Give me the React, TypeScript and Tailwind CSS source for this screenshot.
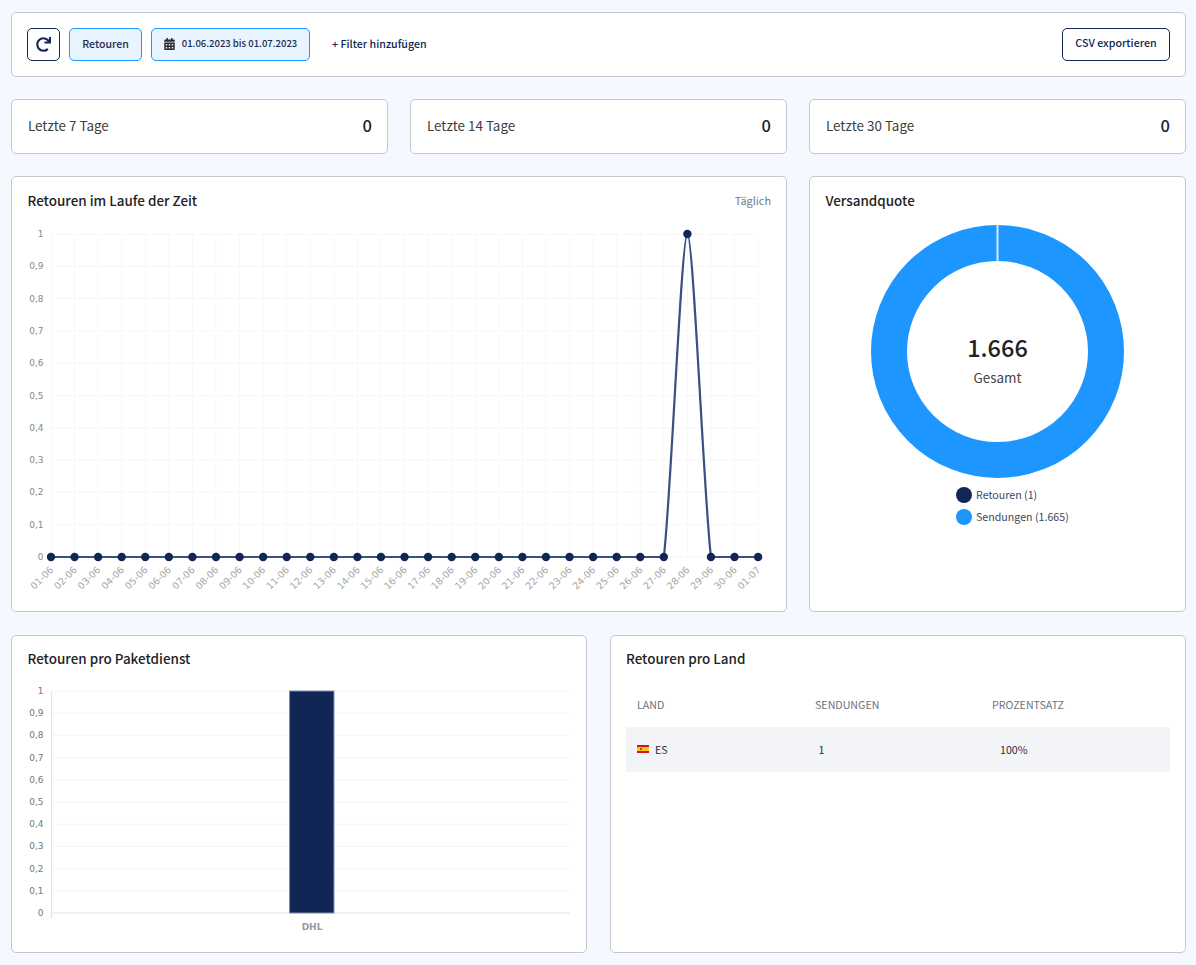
import { FaCalendarAlt, FaRedo } from "react-icons/fa";

const days = [
  "01-06","02-06","03-06","04-06","05-06","06-06","07-06","08-06","09-06","10-06","11-06","12-06","13-06","14-06","15-06","16-06",
  "17-06","18-06","19-06","20-06","21-06","22-06","23-06","24-06","25-06","26-06","27-06","28-06","29-06","30-06","01-07",
];
const ticks = ["0","0,1","0,2","0,3","0,4","0,5","0,6","0,7","0,8","0,9","1"];
const chartFont = '"DejaVu Sans", sans-serif';
const X0 = 51;
const STEP = 23.57;
const Y0 = 557;
const YH = 323;

function LineChart() {
  const xs = days.map((_, i) => X0 + i * STEP);
  const px = xs[27];
  const a = xs[26];
  const b = xs[28];
  const path =
    `M${X0} ${Y0} L${a} ${Y0} C${a + 7} 500 ${px - 6} 234 ${px} 234 C${px + 6} 234 ${b - 7} 500 ${b} ${Y0} L${xs[30]} ${Y0}`;
  return (
    <svg width="774" height="385" viewBox="12 226 774 385" className="block">
      {ticks.map((t, i) => {
        const y = Y0 - (i * YH) / 10;
        return (
          <g key={t}>
            <line x1={X0} x2={758} y1={y} y2={y} stroke="#f6f6f6" />
            <text x={43.5} y={y + 3} textAnchor="end" fontSize="9" fill="#888" fontFamily={chartFont}>{t}</text>
          </g>
        );
      })}
      {xs.map((x) => (
        <line key={x} x1={x} x2={x} y1={234} y2={Y0} stroke="#f8f8f8" />
      ))}
      <path d={path} fill="none" stroke="#3a5080" strokeWidth="2.2" />
      {xs.map((x, i) => (
        <circle key={x} cx={x} cy={i === 27 ? 234 : Y0} r="4.2" fill="#112655" />
      ))}
      {days.map((d, i) => (
        <text
          key={d}
          x={xs[i] + 3}
          y={570.5}
          textAnchor="end"
          fontSize="9.5"
          fill="#a6a6a6"
          fontFamily={chartFont}
          transform={`rotate(-45 ${xs[i] + 3} 570.5)`}
        >
          {d}
        </text>
      ))}
    </svg>
  );
}

function BarChart() {
  const top = 691;
  const bottom = 913;
  return (
    <svg width="574" height="268" viewBox="12 684 574 268" className="block">
      {ticks.map((t, i) => {
        const y = bottom - (i * (bottom - top)) / 10;
        return (
          <g key={t}>
            <line x1={51.5} x2={570} y1={y} y2={y} stroke={i === 0 ? "#e3e3e3" : "#f5f5f5"} />
            <text x={43.5} y={y + 3} textAnchor="end" fontSize="9" fill="#777" fontFamily={chartFont}>{t}</text>
          </g>
        );
      })}
      <line x1={51.5} x2={51.5} y1={top} y2={918} stroke="#e3e3e3" />
      <rect x={289.5} y={top} width={44.5} height={bottom - top} fill="#112655" stroke="#8492b0" strokeWidth="1" />
      <text x={312} y={930} textAnchor="middle" fontSize="9" fontWeight="bold" fill="#999" fontFamily={chartFont}>DHL</text>
    </svg>
  );
}

function Donut() {
  return (
    <svg width="254" height="254" viewBox="0 0 254 254" className="block">
      <circle cx="126.5" cy="126.5" r="108.5" fill="none" stroke="#1e96ff" strokeWidth="36" />
      <line x1="126.5" x2="126.5" y1="0" y2="36.5" stroke="#d6eaff" strokeWidth="2" />
    </svg>
  );
}

function StatCard({ label }: { label: string }) {
  return (
    <div className="flex h-[55px] items-center justify-between rounded-[5px] border border-[#c4c8ce] bg-white pb-[2px] pl-4 pr-[15px]">
      <span className="text-[13.4px] text-[#3d3d3d]">{label}</span>
      <span className="text-[16.5px] font-medium text-[#1f1f1f]">0</span>
    </div>
  );
}

export default function App() {
  return (
    <div
      className="min-h-[965px] bg-[#f5f9ff] pl-[11px] pr-[10px] pt-3"
      style={{ fontFamily: '"Noto Sans CJK SC", sans-serif' }}
    >
      <div className="flex h-[65px] items-center rounded-[5px] border border-[#c4c8ce] bg-white px-[15px]">
        <button className="flex h-[33px] w-[33px] items-center justify-center rounded-[5px] border border-[#112655] text-[#112655]">
          <FaRedo className="h-[15px] w-[15px]" />
        </button>
        <button className="ml-[9px] flex h-[33px] w-[73px] items-center justify-center rounded-[5px] border border-[#1e96ff] bg-[#e8f4ff] pb-[2px] text-[10.6px] font-medium text-[#1c2c50]">
          Retouren
        </button>
        <button className="ml-[9px] flex h-[33px] w-[159px] items-center justify-center gap-[7px] rounded-[5px] border border-[#1e96ff] bg-[#e8f4ff] pb-[2px] text-[9.5px] font-medium text-[#1c2c50]">
          <FaCalendarAlt className="h-[12px] w-[11px] text-[#2b2b2b]" />
          01.06.2023 bis 01.07.2023
        </button>
        <span className="ml-[22px] pb-[2px] text-[10.66px] font-medium text-[#112655]">+ Filter hinzufügen</span>
        <button className="ml-auto flex h-[33px] w-[108px] items-center justify-center rounded-[5px] border border-[#112655] bg-white pb-[2px] text-[10.7px] font-medium text-[#112655]">
          CSV exportieren
        </button>
      </div>

      <div className="mt-[22px] grid grid-cols-3 gap-[22px]">
        <StatCard label="Letzte 7 Tage" />
        <StatCard label="Letzte 14 Tage" />
        <StatCard label="Letzte 30 Tage" />
      </div>

      <div className="mt-[22px] grid grid-cols-3 gap-[22px]">
        <div className="col-span-2 h-[436px] rounded-[5px] border border-[#c4c8ce] bg-white">
          <div className="flex h-[49px] items-start justify-between pl-[15.5px] pr-[15px] pt-[13px]">
            <span className="text-[13.45px] font-medium leading-5 text-[#222]">Retouren im Laufe der Zeit</span>
            <span className="text-[10.9px] leading-5 text-[#6f7a86]">Täglich</span>
          </div>
          <LineChart />
        </div>
        <div className="flex h-[436px] flex-col items-center rounded-[5px] border border-[#c4c8ce] bg-white">
          <div className="h-[48px] w-full pl-[15.5px] pt-[13px] text-[13.45px] font-medium leading-5 text-[#222]">Versandquote</div>
          <div className="relative">
            <Donut />
            <div className="absolute inset-0 flex flex-col items-center justify-center pt-[14px]">
              <span className="text-[23.5px] font-medium leading-8 text-[#222]">1.666</span>
              <span className="mt-[4px] text-[13.4px] leading-5 text-[#444]">Gesamt</span>
            </div>
          </div>
          <div className="mt-[8px] flex flex-col gap-[6px] self-start pl-[146px]">
            <div className="flex h-[16px] items-center gap-[4px] text-[10.66px] text-[#3d4659]">
              <span className="h-4 w-4 rounded-full bg-[#112655]" />
              Retouren (1)
            </div>
            <div className="flex h-[16px] items-center gap-[4px] text-[10.66px] text-[#3d4659]">
              <span className="h-4 w-4 rounded-full bg-[#1e96ff]" />
              Sendungen (1.665)
            </div>
          </div>
        </div>
      </div>

      <div className="mt-[23px] grid grid-cols-2 gap-[23px]">
        <div className="h-[318px] rounded-[5px] border border-[#c4c8ce] bg-white">
          <div className="h-[48px] pl-[15.5px] pt-[12px] text-[13.45px] font-medium leading-5 text-[#222]">Retouren pro Paketdienst</div>
          <BarChart />
        </div>
        <div className="h-[318px] rounded-[5px] border border-[#c4c8ce] bg-white px-[15px]">
          <div className="h-[47px] pt-[12px] text-[13.45px] font-medium leading-5 text-[#222]">Retouren pro Land</div>
          <div className="grid h-[44px] grid-cols-[178px_177px_1fr] items-center pl-[11px] text-[10.66px] text-[#6b7280]">
            <span>LAND</span>
            <span>SENDUNGEN</span>
            <span>PROZENTSATZ</span>
          </div>
          <div className="grid h-[45px] grid-cols-[178px_177px_1fr] items-center bg-[#f3f4f8] pl-[11px] text-[10.66px] text-[#2c2c3c]">
            <span className="flex items-center gap-[6px]">
              <svg width="12" height="8" viewBox="0 0 12 8" className="block">
                <rect width="12" height="8" fill="#d8121b" />
                <rect y="2" width="12" height="4" fill="#f9c70f" />
                <rect x="3" y="3" width="2" height="2" fill="#b8501f" />
              </svg>
              ES
            </span>
            <span className="pl-[3.5px]">1</span>
            <span className="pl-[8px]">100%</span>
          </div>
        </div>
      </div>
    </div>
  );
}
